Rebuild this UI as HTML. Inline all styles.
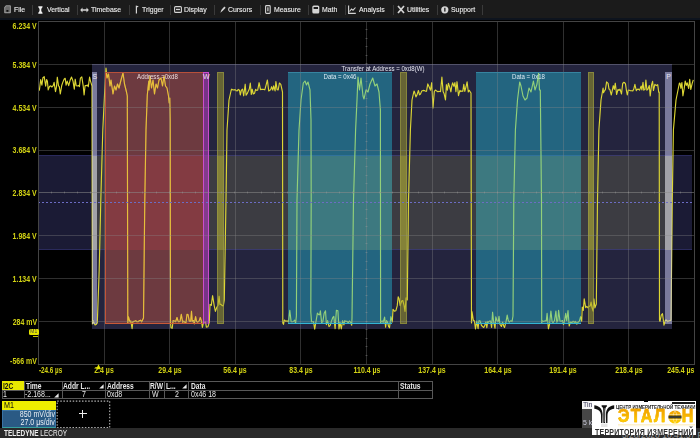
<!DOCTYPE html><html><head><meta charset="utf-8"><style>
html,body{margin:0;padding:0;background:#000;width:700px;height:438px;overflow:hidden;position:relative;font-family:"Liberation Sans",sans-serif;}
div{position:absolute;box-sizing:border-box;}
.tb{font-size:7.5px;color:#f0f0f0;-webkit-text-stroke:0.1px #f0f0f0;top:3.6px;line-height:11px;white-space:nowrap;transform:scaleX(0.92);transform-origin:0 0;}
.sep{top:4.5px;width:1px;height:10px;background:#3a3a3a;}
.yl{font-size:8.3px;font-weight:bold;color:#d2d214;white-space:nowrap;line-height:9px;transform:scaleX(0.84);}
.tc{font-size:8px;color:#e8e8e8;white-space:nowrap;line-height:9px;transform:scaleX(0.86);transform-origin:0 0;}
.ol{font-size:7px;white-space:nowrap;line-height:9px;transform:scaleX(0.87);transform-origin:50% 0;text-align:center}
</style></head><body>
<div style="left:0;top:0;width:700px;height:18px;background:#1b1b1b"></div>
<div style="left:0;top:18px;width:700px;height:1.5px;background:#0e141e"></div>
<div class="tb" style="left:14.0px">File</div>
<div class="tb" style="left:47.0px">Vertical</div>
<div class="tb" style="left:91.0px">Timebase</div>
<div class="tb" style="left:142.0px">Trigger</div>
<div class="tb" style="left:184.0px">Display</div>
<div class="tb" style="left:228.4px">Cursors</div>
<div class="tb" style="left:273.6px">Measure</div>
<div class="tb" style="left:322.0px">Math</div>
<div class="tb" style="left:359.0px">Analysis</div>
<div class="tb" style="left:407.0px">Utilities</div>
<div class="tb" style="left:451.0px">Support</div>
<div class="sep" style="left:32.2px"></div>
<div class="sep" style="left:77.4px"></div>
<div class="sep" style="left:128.8px"></div>
<div class="sep" style="left:170.2px"></div>
<div class="sep" style="left:214.2px"></div>
<div class="sep" style="left:260.2px"></div>
<div class="sep" style="left:307.8px"></div>
<div class="sep" style="left:344.8px"></div>
<div class="sep" style="left:392.8px"></div>
<div class="sep" style="left:436.8px"></div>
<div class="sep" style="left:482.2px"></div>
<svg style="position:absolute;left:3.8px;top:4.8px" width="8" height="9" viewBox="0 0 8 9"><path d="M2 0.3 L6 0.3 Q6.9 0.3 6.9 1.2 L6.9 7.6 Q6.9 8.3 6.1 8.3 L0.9 8.3 Q0.2 8.3 0.2 7.6 L0.2 2.2 Z" fill="#9c9c9c"/><path d="M2.2 1.3 L5.9 1.3 L5.9 7.3 L1.2 7.3 L1.2 2.4 Z" fill="#6a6a6a"/><rect x="2.4" y="5" width="2" height="1.8" fill="#111"/></svg>
<svg style="position:absolute;left:37.5px;top:5.5px" width="5" height="8" viewBox="0 0 5 8"><path d="M0.3 0.3 L4.5 0.3 L4.5 1.3 Q3.2 2.2 3.2 4 Q3.2 5.8 4.5 6.7 L4.5 7.7 L0.3 7.7 L0.3 6.7 Q1.6 5.8 1.6 4 Q1.6 2.2 0.3 1.3 Z" fill="#f0f0f0"/></svg>
<svg style="position:absolute;left:80px;top:6.5px" width="9" height="6" viewBox="0 0 9 6"><path d="M0.2 3 L2.5 0.6 L2.5 2.2 L6.5 2.2 L6.5 0.6 L8.8 3 L6.5 5.4 L6.5 3.8 L2.5 3.8 L2.5 5.4 Z" fill="#d4d4d4"/></svg>
<svg style="position:absolute;left:134.5px;top:5px" width="5" height="9" viewBox="0 0 5 9"><path d="M0.8 0.5 L3.8 1.2 L2 2.6 L2 8.5 L0.8 8.5 Z" fill="#d4d4d4"/></svg>
<svg style="position:absolute;left:174px;top:5.5px" width="8" height="7" viewBox="0 0 8 7"><rect x="0.6" y="0.6" width="6.8" height="5.8" rx="1" fill="none" stroke="#d4d4d4" stroke-width="1.1"/><rect x="2" y="2.8" width="4" height="1.3" fill="#d4d4d4"/></svg>
<svg style="position:absolute;left:219.5px;top:6px" width="6" height="7" viewBox="0 0 6 7"><path d="M0.3 6.7 L1.5 3.8 L4.3 0.5 L5.7 1.7 L2.8 4.8 Z" fill="#d4d4d4"/></svg>
<svg style="position:absolute;left:265px;top:5px" width="6" height="9" viewBox="0 0 6 9"><rect x="0.6" y="0.6" width="4.6" height="7.8" rx="0.8" fill="none" stroke="#d4d4d4" stroke-width="1.1"/><rect x="2.3" y="2.3" width="1.2" height="4" fill="#d4d4d4"/></svg>
<svg style="position:absolute;left:312px;top:5px" width="8" height="9" viewBox="0 0 8 9"><rect x="0.3" y="0.5" width="7" height="8" rx="1.5" fill="#d4d4d4"/><rect x="1.6" y="2" width="4.4" height="2" fill="#1b1b1b"/></svg>
<svg style="position:absolute;left:348px;top:5px" width="8" height="9" viewBox="0 0 8 9"><path d="M0.6 0.5 L0.6 8.4 L7.8 8.4" stroke="#d4d4d4" stroke-width="1.1" fill="none"/><path d="M1.5 6.5 L3.5 4 L5 5.2 L7.5 2.5" stroke="#d4d4d4" stroke-width="1.1" fill="none"/></svg>
<svg style="position:absolute;left:397px;top:5px" width="8" height="9" viewBox="0 0 8 9"><path d="M1 1 L7 8 M7 1 L1 8" stroke="#d4d4d4" stroke-width="1.7" fill="none"/></svg>
<svg style="position:absolute;left:441px;top:5.5px" width="8" height="8" viewBox="0 0 8 8"><circle cx="3.8" cy="3.8" r="3.6" fill="#d4d4d4"/><rect x="3.2" y="1.8" width="1.3" height="3.8" fill="#1b1b1b"/></svg>
<div style="left:92px;top:64px;width:580px;height:264.5px;background:#24243e;border-top:1px solid #36365a"></div><div style="left:38px;top:155px;width:654px;height:95px;background:#1b1b35;border-top:1px solid #2a2a5c;border-bottom:1px solid #2a2a5c"></div><div style="left:92px;top:155px;width:580px;height:95px;background:#3c3c42;border-top:1px solid #3a3a6c;border-bottom:1px solid #3a3a6c"></div><div style="left:92.0px;top:156px;width:5.4px;height:94px;background:#747456"></div><div style="left:665.4px;top:156px;width:6.4px;height:94px;background:#747456"></div><div style="left:105.0px;top:156px;width:98.4px;height:94px;background:#462641"></div><div style="left:203.4px;top:156px;width:5.8px;height:94px;background:#423848"></div><div style="left:217.2px;top:156px;width:6.9px;height:94px;background:#606046"></div><div style="left:400.1px;top:156px;width:6.7px;height:94px;background:#606046"></div><div style="left:588.0px;top:156px;width:6.2px;height:94px;background:#606046"></div><div style="left:288.0px;top:156px;width:104.4px;height:94px;background:#4f453e"></div><div style="left:476.3px;top:156px;width:104.7px;height:94px;background:#4f453e"></div>
<svg style="position:absolute;left:0;top:0" width="700" height="438"><path d="M38.0 90.4 L39.4 90.2 L40.7 79.6 L41.9 85.2 L42.9 77.8 L44.2 76.7 L45.7 86.2 L46.6 79.5 L47.4 81.2 L48.2 89.9 L49.6 86.3 L50.8 85.9 L51.8 87.0 L53.2 85.6 L54.1 82.3 L55.5 91.7 L56.5 86.7 L57.3 77.2 L58.5 85.8 L59.3 86.6 L60.3 94.0 L61.8 85.2 L62.8 82.4 L64.1 79.3 L65.2 78.3 L66.1 85.2 L67.2 81.1 L68.7 85.6 L70.1 80.3 L71.5 77.0 L73.0 81.1 L74.3 89.2 L75.2 79.2 L76.2 85.7 L77.3 86.0 L78.5 85.4 L79.4 86.6 L80.4 78.2 L81.8 76.9 L83.2 85.8 L84.1 95.0 L85.1 85.5 L86.5 85.6 L87.4 85.1 L88.3 86.7 L89.6 77.1 L90.5 81.1 L92.0 86.0 L92.4 324.0 L93.0 320.5 L94.1 323.3 L95.1 325.0 L96.4 324.2 L97.3 323.0 L99.2 270.0 L100.8 200.0 L102.8 130.0 L104.5 95.0 L106.0 68.0 L107.0 78.0 L108.5 74.0 L110.0 86.0 L111.0 80.0 L113.0 94.0 L114.5 86.0 L116.0 90.0 L117.5 84.0 L119.0 88.0 L121.0 80.0 L123.0 73.0 L124.5 84.0 L126.5 92.0 L127.3 96.0 L127.8 323.0 L128.5 316.9 L129.9 321.9 L130.8 321.0 L132.1 328.6 L132.9 321.5 L134.3 321.4 L135.7 320.7 L137.0 321.7 L138.1 321.7 L139.3 320.8 L140.5 320.2 L141.7 321.8 L143.5 318.0 L144.8 200.0 L146.0 130.0 L147.3 95.0 L148.0 88.0 L148.8 81.0 L149.0 90.0 L150.0 76.0 L151.5 88.0 L153.0 80.0 L154.5 94.0 L156.0 84.0 L157.5 88.0 L159.0 80.0 L161.0 78.0 L162.5 86.0 L164.0 76.0 L165.5 86.0 L167.0 88.0 L168.5 96.0 L169.2 103.0 L169.8 98.0 L170.2 120.0 L170.5 323.0 L171.0 327.7 L172.2 328.3 L173.1 320.6 L174.3 321.0 L175.6 321.7 L177.0 317.5 L178.0 320.9 L178.9 321.8 L180.1 321.2 L181.3 314.4 L182.7 322.3 L183.8 321.1 L184.7 322.2 L186.0 322.4 L187.0 314.3 L188.0 314.5 L189.3 321.1 L190.7 321.4 L191.5 311.2 L192.3 321.6 L193.4 320.5 L194.3 323.9 L195.6 316.5 L196.5 321.4 L197.7 322.1 L199.2 320.9 L200.3 317.5 L201.4 320.9 L202.4 327.5 L203.6 322.0 L204.7 322.3 L205.5 321.9 L206.4 327.1 L207.9 326.8 L209.3 322.4 L210.0 304.4 L211.3 305.3 L212.6 295.7 L214.1 305.1 L215.4 311.4 L216.8 307.4 L218.0 305.5 L219.1 296.2 L219.9 304.3 L221.0 304.3 L221.9 305.4 L223.3 305.9 L224.3 300.0 L226.0 200.0 L227.0 130.0 L229.0 100.0 L231.0 91.0 L231.5 89.2 L232.5 89.6 L233.8 90.0 L235.2 89.6 L236.2 90.8 L237.2 90.9 L238.3 89.4 L239.5 90.2 L240.3 95.0 L241.4 90.1 L242.6 89.1 L243.7 95.8 L245.2 84.2 L246.1 95.2 L247.5 93.1 L248.4 90.9 L249.3 89.0 L250.3 83.0 L251.3 94.4 L252.2 89.2 L253.3 94.0 L254.5 93.3 L255.6 89.3 L256.5 90.3 L257.7 90.2 L259.1 82.7 L260.5 89.6 L261.5 89.4 L263.0 89.3 L263.9 89.5 L264.8 89.8 L266.2 84.6 L267.4 80.0 L268.7 90.9 L269.6 90.5 L270.8 89.4 L271.6 86.7 L272.8 90.1 L273.7 85.8 L275.1 90.9 L275.9 81.5 L277.1 89.7 L278.2 89.9 L279.4 83.0 L280.8 84.4 L282.5 92.0 L282.8 323.0 L283.5 324.3 L284.4 320.0 L285.8 321.4 L287.2 320.8 L288.5 322.0 L289.8 310.4 L291.1 321.6 L292.2 321.8 L293.5 321.5 L294.6 320.1 L295.6 323.4 L296.4 316.0 L297.0 200.0 L299.0 130.0 L301.0 100.0 L303.3 83.0 L305.0 81.0 L306.5 85.0 L308.0 82.0 L310.0 90.0 L311.0 120.0 L311.2 200.0 L310.8 312.0 L311.5 321.7 L312.5 321.8 L313.5 321.6 L314.7 329.1 L315.9 322.0 L317.4 313.1 L318.7 314.6 L319.6 314.8 L320.4 310.9 L321.6 322.4 L322.8 321.8 L324.2 313.2 L325.5 310.8 L326.4 324.7 L327.6 320.6 L329.0 326.6 L330.2 325.3 L331.5 321.1 L332.8 317.5 L333.8 316.4 L335.1 328.6 L336.4 310.3 L337.9 310.9 L339.0 329.0 L340.0 322.4 L341.3 329.0 L342.6 320.7 L343.9 324.9 L344.7 320.7 L345.8 321.4 L346.8 321.3 L348.2 322.5 L349.6 321.0 L350.5 322.1 L351.7 325.2 L352.0 318.0 L353.5 200.0 L355.6 130.0 L357.0 100.0 L358.0 77.0 L359.5 90.0 L361.0 78.0 L363.0 96.0 L364.0 99.0 L366.0 90.0 L368.0 92.0 L370.0 84.0 L372.7 78.0 L375.0 86.0 L377.0 84.0 L379.0 92.0 L380.4 110.0 L380.6 323.0 L381.0 321.7 L382.2 320.9 L383.2 322.3 L384.6 317.1 L385.6 327.1 L386.5 320.6 L387.4 321.6 L388.6 326.4 L389.5 327.8 L390.9 316.7 L392.3 322.0 L393.0 309.3 L394.4 311.2 L395.9 310.7 L397.2 305.9 L398.2 296.8 L399.1 298.8 L400.2 305.6 L401.6 301.1 L402.8 300.5 L404.1 305.6 L405.0 311.5 L406.1 297.9 L407.3 300.0 L408.5 200.0 L410.4 130.0 L412.0 100.0 L414.0 91.0 L414.5 91.9 L415.9 96.9 L417.0 94.9 L418.4 90.5 L419.5 94.8 L420.5 94.0 L421.7 91.1 L423.1 90.4 L424.4 90.6 L425.3 91.1 L426.5 91.3 L427.8 83.9 L429.2 87.0 L430.5 90.2 L431.7 82.7 L433.0 108.0 L434.3 91.5 L435.4 90.0 L436.7 91.1 L438.0 91.8 L439.1 91.3 L440.5 91.7 L441.9 77.0 L443.1 91.6 L444.1 93.7 L445.5 100.0 L446.4 84.7 L447.4 90.1 L448.4 83.3 L449.7 87.1 L450.9 91.8 L451.7 86.3 L452.6 82.8 L453.9 86.3 L454.9 82.6 L455.9 91.6 L457.0 81.7 L458.5 95.6 L459.9 90.4 L460.8 91.6 L461.8 91.0 L462.8 91.3 L463.8 84.4 L464.8 91.4 L466.1 86.5 L467.1 81.8 L468.3 92.0 L469.2 90.3 L471.0 93.0 L471.5 323.0 L472.0 311.6 L473.4 320.7 L474.4 320.7 L475.5 328.9 L476.7 321.1 L478.1 328.7 L478.9 320.9 L480.1 320.8 L481.5 325.5 L482.4 326.3 L483.7 327.5 L484.5 326.3 L486.0 321.8 L486.8 327.6 L487.8 321.4 L488.6 322.1 L489.5 321.1 L490.6 321.1 L491.6 327.4 L492.6 312.2 L493.6 321.6 L495.0 328.2 L495.8 316.9 L497.1 320.9 L498.2 321.7 L499.0 316.4 L499.9 324.2 L501.4 326.5 L502.6 322.1 L503.7 326.0 L504.5 327.5 L506.0 321.8 L507.2 315.1 L508.3 320.7 L509.3 322.1 L510.7 320.8 L512.0 321.6 L513.0 316.0 L513.8 200.0 L515.4 130.0 L517.5 100.0 L519.7 82.0 L521.0 86.0 L523.0 96.0 L525.0 100.0 L527.0 98.0 L529.0 88.0 L531.0 92.0 L533.4 81.0 L535.0 90.0 L537.0 84.0 L538.6 73.0 L539.5 90.0 L540.3 90.0 L541.5 200.0 L541.7 323.0 L542.2 320.8 L543.5 321.5 L544.8 320.9 L546.3 320.9 L547.1 313.3 L548.4 328.8 L549.5 324.5 L550.9 311.0 L552.1 321.6 L553.1 322.5 L554.5 320.7 L555.9 311.0 L556.8 322.2 L557.8 320.7 L558.6 310.3 L560.0 321.1 L561.3 321.3 L562.5 320.5 L563.5 324.6 L564.5 320.8 L565.7 313.4 L566.7 320.6 L568.0 310.5 L569.2 326.0 L570.5 322.0 L571.8 322.5 L573.2 321.3 L574.3 322.3 L575.4 321.4 L576.9 324.1 L578.2 322.0 L579.4 321.1 L580.6 316.7 L581.7 321.3 L582.3 307.1 L583.3 310.4 L584.2 298.8 L585.7 307.7 L586.8 306.4 L588.1 307.8 L589.0 306.2 L590.2 306.0 L591.1 302.1 L592.0 307.6 L593.1 311.2 L593.9 298.8 L594.9 307.9 L596.3 304.0 L597.5 200.0 L598.9 130.0 L601.0 100.0 L603.1 88.0 L603.5 92.6 L604.5 90.8 L605.4 89.7 L606.6 81.9 L608.1 83.3 L609.0 89.1 L609.9 89.6 L611.3 95.0 L612.2 90.9 L613.3 85.7 L614.3 89.4 L615.3 83.2 L616.6 94.5 L618.0 89.5 L619.0 90.3 L620.0 89.2 L621.5 94.0 L622.7 83.5 L623.7 82.4 L624.6 82.6 L625.5 83.8 L626.5 91.0 L627.3 94.9 L628.3 90.0 L629.3 90.3 L630.3 90.6 L631.5 90.7 L632.8 90.9 L633.7 89.3 L634.9 84.4 L636.3 90.6 L637.2 89.4 L638.4 89.1 L639.6 90.1 L641.1 86.1 L641.9 89.9 L643.0 82.4 L643.8 90.1 L645.0 89.5 L645.9 80.0 L646.9 90.1 L647.9 89.2 L649.3 85.5 L650.2 96.0 L651.6 84.6 L652.6 81.4 L653.4 90.5 L654.9 84.3 L656.3 85.6 L657.7 84.7 L658.7 92.1 L659.2 92.0 L659.5 320.0 L660.0 321.5 L661.3 315.2 L662.5 313.7 L664.0 325.1 L665.4 320.1 L666.5 320.1 L667.6 321.7 L668.8 320.9 L669.9 320.8 L671.0 320.0 L672.3 200.0 L673.4 130.0 L676.0 100.0 L679.4 83.0 L680.0 83.2 L680.9 88.3 L681.9 82.5 L682.9 95.8 L684.2 88.4 L685.2 81.0 L686.3 85.4 L687.2 82.9 L688.7 88.5 L689.7 79.4 L690.8 89.4 L692.2 83.4 L693.3 79.8" fill="none" stroke="#dcd634" stroke-width="1.15" stroke-linejoin="round"/></svg>
<div style="left:92.0px;top:72px;width:5.4px;height:252px;background:#d0d0fa;opacity:0.50"></div><div style="left:665.4px;top:72px;width:6.4px;height:252px;background:#d0d0fa;opacity:0.50"></div><div style="left:105.0px;top:72px;width:98.4px;height:252px;background:#f76344;opacity:0.35"></div><div style="left:203.4px;top:72px;width:5.8px;height:252px;background:#ad3fb9;opacity:0.60"></div><div style="left:217.2px;top:72px;width:6.9px;height:252px;background:#a8a42a;opacity:0.50"></div><div style="left:400.1px;top:72px;width:6.7px;height:252px;background:#a8a42a;opacity:0.50"></div><div style="left:588.0px;top:72px;width:6.2px;height:252px;background:#a8a42a;opacity:0.50"></div><div style="left:288.0px;top:72px;width:104.4px;height:252px;background:#24c9e3;opacity:0.40"></div><div style="left:476.3px;top:72px;width:104.7px;height:252px;background:#24c9e3;opacity:0.40"></div>
<svg style="position:absolute;left:0;top:0" width="700" height="438"><defs><clipPath id="cr"><rect x="105" y="72" width="98.4" height="252"/></clipPath></defs><path d="M38.0 90.4 L39.4 90.2 L40.7 79.6 L41.9 85.2 L42.9 77.8 L44.2 76.7 L45.7 86.2 L46.6 79.5 L47.4 81.2 L48.2 89.9 L49.6 86.3 L50.8 85.9 L51.8 87.0 L53.2 85.6 L54.1 82.3 L55.5 91.7 L56.5 86.7 L57.3 77.2 L58.5 85.8 L59.3 86.6 L60.3 94.0 L61.8 85.2 L62.8 82.4 L64.1 79.3 L65.2 78.3 L66.1 85.2 L67.2 81.1 L68.7 85.6 L70.1 80.3 L71.5 77.0 L73.0 81.1 L74.3 89.2 L75.2 79.2 L76.2 85.7 L77.3 86.0 L78.5 85.4 L79.4 86.6 L80.4 78.2 L81.8 76.9 L83.2 85.8 L84.1 95.0 L85.1 85.5 L86.5 85.6 L87.4 85.1 L88.3 86.7 L89.6 77.1 L90.5 81.1 L92.0 86.0 L92.4 324.0 L93.0 320.5 L94.1 323.3 L95.1 325.0 L96.4 324.2 L97.3 323.0 L99.2 270.0 L100.8 200.0 L102.8 130.0 L104.5 95.0 L106.0 68.0 L107.0 78.0 L108.5 74.0 L110.0 86.0 L111.0 80.0 L113.0 94.0 L114.5 86.0 L116.0 90.0 L117.5 84.0 L119.0 88.0 L121.0 80.0 L123.0 73.0 L124.5 84.0 L126.5 92.0 L127.3 96.0 L127.8 323.0 L128.5 316.9 L129.9 321.9 L130.8 321.0 L132.1 328.6 L132.9 321.5 L134.3 321.4 L135.7 320.7 L137.0 321.7 L138.1 321.7 L139.3 320.8 L140.5 320.2 L141.7 321.8 L143.5 318.0 L144.8 200.0 L146.0 130.0 L147.3 95.0 L148.0 88.0 L148.8 81.0 L149.0 90.0 L150.0 76.0 L151.5 88.0 L153.0 80.0 L154.5 94.0 L156.0 84.0 L157.5 88.0 L159.0 80.0 L161.0 78.0 L162.5 86.0 L164.0 76.0 L165.5 86.0 L167.0 88.0 L168.5 96.0 L169.2 103.0 L169.8 98.0 L170.2 120.0 L170.5 323.0 L171.0 327.7 L172.2 328.3 L173.1 320.6 L174.3 321.0 L175.6 321.7 L177.0 317.5 L178.0 320.9 L178.9 321.8 L180.1 321.2 L181.3 314.4 L182.7 322.3 L183.8 321.1 L184.7 322.2 L186.0 322.4 L187.0 314.3 L188.0 314.5 L189.3 321.1 L190.7 321.4 L191.5 311.2 L192.3 321.6 L193.4 320.5 L194.3 323.9 L195.6 316.5 L196.5 321.4 L197.7 322.1 L199.2 320.9 L200.3 317.5 L201.4 320.9 L202.4 327.5 L203.6 322.0 L204.7 322.3 L205.5 321.9 L206.4 327.1 L207.9 326.8 L209.3 322.4 L210.0 304.4 L211.3 305.3 L212.6 295.7 L214.1 305.1 L215.4 311.4 L216.8 307.4 L218.0 305.5 L219.1 296.2 L219.9 304.3 L221.0 304.3 L221.9 305.4 L223.3 305.9 L224.3 300.0 L226.0 200.0 L227.0 130.0 L229.0 100.0 L231.0 91.0 L231.5 89.2 L232.5 89.6 L233.8 90.0 L235.2 89.6 L236.2 90.8 L237.2 90.9 L238.3 89.4 L239.5 90.2 L240.3 95.0 L241.4 90.1 L242.6 89.1 L243.7 95.8 L245.2 84.2 L246.1 95.2 L247.5 93.1 L248.4 90.9 L249.3 89.0 L250.3 83.0 L251.3 94.4 L252.2 89.2 L253.3 94.0 L254.5 93.3 L255.6 89.3 L256.5 90.3 L257.7 90.2 L259.1 82.7 L260.5 89.6 L261.5 89.4 L263.0 89.3 L263.9 89.5 L264.8 89.8 L266.2 84.6 L267.4 80.0 L268.7 90.9 L269.6 90.5 L270.8 89.4 L271.6 86.7 L272.8 90.1 L273.7 85.8 L275.1 90.9 L275.9 81.5 L277.1 89.7 L278.2 89.9 L279.4 83.0 L280.8 84.4 L282.5 92.0 L282.8 323.0 L283.5 324.3 L284.4 320.0 L285.8 321.4 L287.2 320.8 L288.5 322.0 L289.8 310.4 L291.1 321.6 L292.2 321.8 L293.5 321.5 L294.6 320.1 L295.6 323.4 L296.4 316.0 L297.0 200.0 L299.0 130.0 L301.0 100.0 L303.3 83.0 L305.0 81.0 L306.5 85.0 L308.0 82.0 L310.0 90.0 L311.0 120.0 L311.2 200.0 L310.8 312.0 L311.5 321.7 L312.5 321.8 L313.5 321.6 L314.7 329.1 L315.9 322.0 L317.4 313.1 L318.7 314.6 L319.6 314.8 L320.4 310.9 L321.6 322.4 L322.8 321.8 L324.2 313.2 L325.5 310.8 L326.4 324.7 L327.6 320.6 L329.0 326.6 L330.2 325.3 L331.5 321.1 L332.8 317.5 L333.8 316.4 L335.1 328.6 L336.4 310.3 L337.9 310.9 L339.0 329.0 L340.0 322.4 L341.3 329.0 L342.6 320.7 L343.9 324.9 L344.7 320.7 L345.8 321.4 L346.8 321.3 L348.2 322.5 L349.6 321.0 L350.5 322.1 L351.7 325.2 L352.0 318.0 L353.5 200.0 L355.6 130.0 L357.0 100.0 L358.0 77.0 L359.5 90.0 L361.0 78.0 L363.0 96.0 L364.0 99.0 L366.0 90.0 L368.0 92.0 L370.0 84.0 L372.7 78.0 L375.0 86.0 L377.0 84.0 L379.0 92.0 L380.4 110.0 L380.6 323.0 L381.0 321.7 L382.2 320.9 L383.2 322.3 L384.6 317.1 L385.6 327.1 L386.5 320.6 L387.4 321.6 L388.6 326.4 L389.5 327.8 L390.9 316.7 L392.3 322.0 L393.0 309.3 L394.4 311.2 L395.9 310.7 L397.2 305.9 L398.2 296.8 L399.1 298.8 L400.2 305.6 L401.6 301.1 L402.8 300.5 L404.1 305.6 L405.0 311.5 L406.1 297.9 L407.3 300.0 L408.5 200.0 L410.4 130.0 L412.0 100.0 L414.0 91.0 L414.5 91.9 L415.9 96.9 L417.0 94.9 L418.4 90.5 L419.5 94.8 L420.5 94.0 L421.7 91.1 L423.1 90.4 L424.4 90.6 L425.3 91.1 L426.5 91.3 L427.8 83.9 L429.2 87.0 L430.5 90.2 L431.7 82.7 L433.0 108.0 L434.3 91.5 L435.4 90.0 L436.7 91.1 L438.0 91.8 L439.1 91.3 L440.5 91.7 L441.9 77.0 L443.1 91.6 L444.1 93.7 L445.5 100.0 L446.4 84.7 L447.4 90.1 L448.4 83.3 L449.7 87.1 L450.9 91.8 L451.7 86.3 L452.6 82.8 L453.9 86.3 L454.9 82.6 L455.9 91.6 L457.0 81.7 L458.5 95.6 L459.9 90.4 L460.8 91.6 L461.8 91.0 L462.8 91.3 L463.8 84.4 L464.8 91.4 L466.1 86.5 L467.1 81.8 L468.3 92.0 L469.2 90.3 L471.0 93.0 L471.5 323.0 L472.0 311.6 L473.4 320.7 L474.4 320.7 L475.5 328.9 L476.7 321.1 L478.1 328.7 L478.9 320.9 L480.1 320.8 L481.5 325.5 L482.4 326.3 L483.7 327.5 L484.5 326.3 L486.0 321.8 L486.8 327.6 L487.8 321.4 L488.6 322.1 L489.5 321.1 L490.6 321.1 L491.6 327.4 L492.6 312.2 L493.6 321.6 L495.0 328.2 L495.8 316.9 L497.1 320.9 L498.2 321.7 L499.0 316.4 L499.9 324.2 L501.4 326.5 L502.6 322.1 L503.7 326.0 L504.5 327.5 L506.0 321.8 L507.2 315.1 L508.3 320.7 L509.3 322.1 L510.7 320.8 L512.0 321.6 L513.0 316.0 L513.8 200.0 L515.4 130.0 L517.5 100.0 L519.7 82.0 L521.0 86.0 L523.0 96.0 L525.0 100.0 L527.0 98.0 L529.0 88.0 L531.0 92.0 L533.4 81.0 L535.0 90.0 L537.0 84.0 L538.6 73.0 L539.5 90.0 L540.3 90.0 L541.5 200.0 L541.7 323.0 L542.2 320.8 L543.5 321.5 L544.8 320.9 L546.3 320.9 L547.1 313.3 L548.4 328.8 L549.5 324.5 L550.9 311.0 L552.1 321.6 L553.1 322.5 L554.5 320.7 L555.9 311.0 L556.8 322.2 L557.8 320.7 L558.6 310.3 L560.0 321.1 L561.3 321.3 L562.5 320.5 L563.5 324.6 L564.5 320.8 L565.7 313.4 L566.7 320.6 L568.0 310.5 L569.2 326.0 L570.5 322.0 L571.8 322.5 L573.2 321.3 L574.3 322.3 L575.4 321.4 L576.9 324.1 L578.2 322.0 L579.4 321.1 L580.6 316.7 L581.7 321.3 L582.3 307.1 L583.3 310.4 L584.2 298.8 L585.7 307.7 L586.8 306.4 L588.1 307.8 L589.0 306.2 L590.2 306.0 L591.1 302.1 L592.0 307.6 L593.1 311.2 L593.9 298.8 L594.9 307.9 L596.3 304.0 L597.5 200.0 L598.9 130.0 L601.0 100.0 L603.1 88.0 L603.5 92.6 L604.5 90.8 L605.4 89.7 L606.6 81.9 L608.1 83.3 L609.0 89.1 L609.9 89.6 L611.3 95.0 L612.2 90.9 L613.3 85.7 L614.3 89.4 L615.3 83.2 L616.6 94.5 L618.0 89.5 L619.0 90.3 L620.0 89.2 L621.5 94.0 L622.7 83.5 L623.7 82.4 L624.6 82.6 L625.5 83.8 L626.5 91.0 L627.3 94.9 L628.3 90.0 L629.3 90.3 L630.3 90.6 L631.5 90.7 L632.8 90.9 L633.7 89.3 L634.9 84.4 L636.3 90.6 L637.2 89.4 L638.4 89.1 L639.6 90.1 L641.1 86.1 L641.9 89.9 L643.0 82.4 L643.8 90.1 L645.0 89.5 L645.9 80.0 L646.9 90.1 L647.9 89.2 L649.3 85.5 L650.2 96.0 L651.6 84.6 L652.6 81.4 L653.4 90.5 L654.9 84.3 L656.3 85.6 L657.7 84.7 L658.7 92.1 L659.2 92.0 L659.5 320.0 L660.0 321.5 L661.3 315.2 L662.5 313.7 L664.0 325.1 L665.4 320.1 L666.5 320.1 L667.6 321.7 L668.8 320.9 L669.9 320.8 L671.0 320.0 L672.3 200.0 L673.4 130.0 L676.0 100.0 L679.4 83.0 L680.0 83.2 L680.9 88.3 L681.9 82.5 L682.9 95.8 L684.2 88.4 L685.2 81.0 L686.3 85.4 L687.2 82.9 L688.7 88.5 L689.7 79.4 L690.8 89.4 L692.2 83.4 L693.3 79.8" clip-path="url(#cr)" fill="none" stroke="#e8e040" stroke-opacity="0.35" stroke-width="1.1" stroke-linejoin="round"/></svg>
<svg style="position:absolute;left:0;top:0" width="700" height="438"><line x1="104.5" y1="21" x2="104.5" y2="364" stroke="#8a8a8a" stroke-opacity="0.34" stroke-width="1"/><line x1="169.5" y1="21" x2="169.5" y2="364" stroke="#8a8a8a" stroke-opacity="0.34" stroke-width="1"/><line x1="235.5" y1="21" x2="235.5" y2="364" stroke="#8a8a8a" stroke-opacity="0.34" stroke-width="1"/><line x1="300.5" y1="21" x2="300.5" y2="364" stroke="#8a8a8a" stroke-opacity="0.34" stroke-width="1"/><line x1="366.5" y1="21" x2="366.5" y2="364" stroke="#8a8a8a" stroke-opacity="0.34" stroke-width="1"/><line x1="432.5" y1="21" x2="432.5" y2="364" stroke="#8a8a8a" stroke-opacity="0.34" stroke-width="1"/><line x1="497.5" y1="21" x2="497.5" y2="364" stroke="#8a8a8a" stroke-opacity="0.34" stroke-width="1"/><line x1="563.5" y1="21" x2="563.5" y2="364" stroke="#8a8a8a" stroke-opacity="0.34" stroke-width="1"/><line x1="628.5" y1="21" x2="628.5" y2="364" stroke="#8a8a8a" stroke-opacity="0.34" stroke-width="1"/><line x1="38" y1="64.5" x2="694" y2="64.5" stroke="#8a8a8a" stroke-opacity="0.34" stroke-width="1"/><line x1="38" y1="107.5" x2="694" y2="107.5" stroke="#8a8a8a" stroke-opacity="0.34" stroke-width="1"/><line x1="38" y1="150.5" x2="694" y2="150.5" stroke="#8a8a8a" stroke-opacity="0.34" stroke-width="1"/><line x1="38" y1="192.5" x2="694" y2="192.5" stroke="#8a8a8a" stroke-opacity="0.34" stroke-width="1"/><line x1="38" y1="235.5" x2="694" y2="235.5" stroke="#8a8a8a" stroke-opacity="0.34" stroke-width="1"/><line x1="38" y1="278.5" x2="694" y2="278.5" stroke="#8a8a8a" stroke-opacity="0.34" stroke-width="1"/><line x1="38" y1="321.5" x2="694" y2="321.5" stroke="#8a8a8a" stroke-opacity="0.34" stroke-width="1"/><line x1="38" y1="192.5" x2="694" y2="192.5" stroke="#909090" stroke-opacity="0.3" stroke-width="1"/><line x1="38.5" y1="191.5" x2="38.5" y2="193.5" stroke="#a0a0a0" stroke-opacity="0.35" stroke-width="1"/><line x1="51.5" y1="191.5" x2="51.5" y2="193.5" stroke="#a0a0a0" stroke-opacity="0.35" stroke-width="1"/><line x1="64.5" y1="191.5" x2="64.5" y2="193.5" stroke="#a0a0a0" stroke-opacity="0.35" stroke-width="1"/><line x1="77.5" y1="191.5" x2="77.5" y2="193.5" stroke="#a0a0a0" stroke-opacity="0.35" stroke-width="1"/><line x1="90.5" y1="191.5" x2="90.5" y2="193.5" stroke="#a0a0a0" stroke-opacity="0.35" stroke-width="1"/><line x1="103.5" y1="191.5" x2="103.5" y2="193.5" stroke="#a0a0a0" stroke-opacity="0.35" stroke-width="1"/><line x1="116.5" y1="191.5" x2="116.5" y2="193.5" stroke="#a0a0a0" stroke-opacity="0.35" stroke-width="1"/><line x1="129.5" y1="191.5" x2="129.5" y2="193.5" stroke="#a0a0a0" stroke-opacity="0.35" stroke-width="1"/><line x1="142.5" y1="191.5" x2="142.5" y2="193.5" stroke="#a0a0a0" stroke-opacity="0.35" stroke-width="1"/><line x1="156.5" y1="191.5" x2="156.5" y2="193.5" stroke="#a0a0a0" stroke-opacity="0.35" stroke-width="1"/><line x1="169.5" y1="191.5" x2="169.5" y2="193.5" stroke="#a0a0a0" stroke-opacity="0.35" stroke-width="1"/><line x1="182.5" y1="191.5" x2="182.5" y2="193.5" stroke="#a0a0a0" stroke-opacity="0.35" stroke-width="1"/><line x1="195.5" y1="191.5" x2="195.5" y2="193.5" stroke="#a0a0a0" stroke-opacity="0.35" stroke-width="1"/><line x1="208.5" y1="191.5" x2="208.5" y2="193.5" stroke="#a0a0a0" stroke-opacity="0.35" stroke-width="1"/><line x1="221.5" y1="191.5" x2="221.5" y2="193.5" stroke="#a0a0a0" stroke-opacity="0.35" stroke-width="1"/><line x1="234.5" y1="191.5" x2="234.5" y2="193.5" stroke="#a0a0a0" stroke-opacity="0.35" stroke-width="1"/><line x1="247.5" y1="191.5" x2="247.5" y2="193.5" stroke="#a0a0a0" stroke-opacity="0.35" stroke-width="1"/><line x1="261.5" y1="191.5" x2="261.5" y2="193.5" stroke="#a0a0a0" stroke-opacity="0.35" stroke-width="1"/><line x1="274.5" y1="191.5" x2="274.5" y2="193.5" stroke="#a0a0a0" stroke-opacity="0.35" stroke-width="1"/><line x1="287.5" y1="191.5" x2="287.5" y2="193.5" stroke="#a0a0a0" stroke-opacity="0.35" stroke-width="1"/><line x1="300.5" y1="191.5" x2="300.5" y2="193.5" stroke="#a0a0a0" stroke-opacity="0.35" stroke-width="1"/><line x1="313.5" y1="191.5" x2="313.5" y2="193.5" stroke="#a0a0a0" stroke-opacity="0.35" stroke-width="1"/><line x1="326.5" y1="191.5" x2="326.5" y2="193.5" stroke="#a0a0a0" stroke-opacity="0.35" stroke-width="1"/><line x1="339.5" y1="191.5" x2="339.5" y2="193.5" stroke="#a0a0a0" stroke-opacity="0.35" stroke-width="1"/><line x1="352.5" y1="191.5" x2="352.5" y2="193.5" stroke="#a0a0a0" stroke-opacity="0.35" stroke-width="1"/><line x1="366.5" y1="191.5" x2="366.5" y2="193.5" stroke="#a0a0a0" stroke-opacity="0.35" stroke-width="1"/><line x1="379.5" y1="191.5" x2="379.5" y2="193.5" stroke="#a0a0a0" stroke-opacity="0.35" stroke-width="1"/><line x1="392.5" y1="191.5" x2="392.5" y2="193.5" stroke="#a0a0a0" stroke-opacity="0.35" stroke-width="1"/><line x1="405.5" y1="191.5" x2="405.5" y2="193.5" stroke="#a0a0a0" stroke-opacity="0.35" stroke-width="1"/><line x1="418.5" y1="191.5" x2="418.5" y2="193.5" stroke="#a0a0a0" stroke-opacity="0.35" stroke-width="1"/><line x1="431.5" y1="191.5" x2="431.5" y2="193.5" stroke="#a0a0a0" stroke-opacity="0.35" stroke-width="1"/><line x1="444.5" y1="191.5" x2="444.5" y2="193.5" stroke="#a0a0a0" stroke-opacity="0.35" stroke-width="1"/><line x1="457.5" y1="191.5" x2="457.5" y2="193.5" stroke="#a0a0a0" stroke-opacity="0.35" stroke-width="1"/><line x1="470.5" y1="191.5" x2="470.5" y2="193.5" stroke="#a0a0a0" stroke-opacity="0.35" stroke-width="1"/><line x1="484.5" y1="191.5" x2="484.5" y2="193.5" stroke="#a0a0a0" stroke-opacity="0.35" stroke-width="1"/><line x1="497.5" y1="191.5" x2="497.5" y2="193.5" stroke="#a0a0a0" stroke-opacity="0.35" stroke-width="1"/><line x1="510.5" y1="191.5" x2="510.5" y2="193.5" stroke="#a0a0a0" stroke-opacity="0.35" stroke-width="1"/><line x1="523.5" y1="191.5" x2="523.5" y2="193.5" stroke="#a0a0a0" stroke-opacity="0.35" stroke-width="1"/><line x1="536.5" y1="191.5" x2="536.5" y2="193.5" stroke="#a0a0a0" stroke-opacity="0.35" stroke-width="1"/><line x1="549.5" y1="191.5" x2="549.5" y2="193.5" stroke="#a0a0a0" stroke-opacity="0.35" stroke-width="1"/><line x1="562.5" y1="191.5" x2="562.5" y2="193.5" stroke="#a0a0a0" stroke-opacity="0.35" stroke-width="1"/><line x1="575.5" y1="191.5" x2="575.5" y2="193.5" stroke="#a0a0a0" stroke-opacity="0.35" stroke-width="1"/><line x1="589.5" y1="191.5" x2="589.5" y2="193.5" stroke="#a0a0a0" stroke-opacity="0.35" stroke-width="1"/><line x1="602.5" y1="191.5" x2="602.5" y2="193.5" stroke="#a0a0a0" stroke-opacity="0.35" stroke-width="1"/><line x1="615.5" y1="191.5" x2="615.5" y2="193.5" stroke="#a0a0a0" stroke-opacity="0.35" stroke-width="1"/><line x1="628.5" y1="191.5" x2="628.5" y2="193.5" stroke="#a0a0a0" stroke-opacity="0.35" stroke-width="1"/><line x1="641.5" y1="191.5" x2="641.5" y2="193.5" stroke="#a0a0a0" stroke-opacity="0.35" stroke-width="1"/><line x1="654.5" y1="191.5" x2="654.5" y2="193.5" stroke="#a0a0a0" stroke-opacity="0.35" stroke-width="1"/><line x1="667.5" y1="191.5" x2="667.5" y2="193.5" stroke="#a0a0a0" stroke-opacity="0.35" stroke-width="1"/><line x1="680.5" y1="191.5" x2="680.5" y2="193.5" stroke="#a0a0a0" stroke-opacity="0.35" stroke-width="1"/><line x1="694.5" y1="191.5" x2="694.5" y2="193.5" stroke="#a0a0a0" stroke-opacity="0.35" stroke-width="1"/><line x1="365.5" y1="21.5" x2="367.5" y2="21.5" stroke="#a0a0a0" stroke-opacity="0.35" stroke-width="1"/><line x1="365.5" y1="29.5" x2="367.5" y2="29.5" stroke="#a0a0a0" stroke-opacity="0.35" stroke-width="1"/><line x1="365.5" y1="38.5" x2="367.5" y2="38.5" stroke="#a0a0a0" stroke-opacity="0.35" stroke-width="1"/><line x1="365.5" y1="46.5" x2="367.5" y2="46.5" stroke="#a0a0a0" stroke-opacity="0.35" stroke-width="1"/><line x1="365.5" y1="55.5" x2="367.5" y2="55.5" stroke="#a0a0a0" stroke-opacity="0.35" stroke-width="1"/><line x1="365.5" y1="63.5" x2="367.5" y2="63.5" stroke="#a0a0a0" stroke-opacity="0.35" stroke-width="1"/><line x1="365.5" y1="72.5" x2="367.5" y2="72.5" stroke="#a0a0a0" stroke-opacity="0.35" stroke-width="1"/><line x1="365.5" y1="81.5" x2="367.5" y2="81.5" stroke="#a0a0a0" stroke-opacity="0.35" stroke-width="1"/><line x1="365.5" y1="89.5" x2="367.5" y2="89.5" stroke="#a0a0a0" stroke-opacity="0.35" stroke-width="1"/><line x1="365.5" y1="98.5" x2="367.5" y2="98.5" stroke="#a0a0a0" stroke-opacity="0.35" stroke-width="1"/><line x1="365.5" y1="106.5" x2="367.5" y2="106.5" stroke="#a0a0a0" stroke-opacity="0.35" stroke-width="1"/><line x1="365.5" y1="115.5" x2="367.5" y2="115.5" stroke="#a0a0a0" stroke-opacity="0.35" stroke-width="1"/><line x1="365.5" y1="123.5" x2="367.5" y2="123.5" stroke="#a0a0a0" stroke-opacity="0.35" stroke-width="1"/><line x1="365.5" y1="132.5" x2="367.5" y2="132.5" stroke="#a0a0a0" stroke-opacity="0.35" stroke-width="1"/><line x1="365.5" y1="141.5" x2="367.5" y2="141.5" stroke="#a0a0a0" stroke-opacity="0.35" stroke-width="1"/><line x1="365.5" y1="149.5" x2="367.5" y2="149.5" stroke="#a0a0a0" stroke-opacity="0.35" stroke-width="1"/><line x1="365.5" y1="158.5" x2="367.5" y2="158.5" stroke="#a0a0a0" stroke-opacity="0.35" stroke-width="1"/><line x1="365.5" y1="166.5" x2="367.5" y2="166.5" stroke="#a0a0a0" stroke-opacity="0.35" stroke-width="1"/><line x1="365.5" y1="175.5" x2="367.5" y2="175.5" stroke="#a0a0a0" stroke-opacity="0.35" stroke-width="1"/><line x1="365.5" y1="183.5" x2="367.5" y2="183.5" stroke="#a0a0a0" stroke-opacity="0.35" stroke-width="1"/><line x1="365.5" y1="192.5" x2="367.5" y2="192.5" stroke="#a0a0a0" stroke-opacity="0.35" stroke-width="1"/><line x1="365.5" y1="201.5" x2="367.5" y2="201.5" stroke="#a0a0a0" stroke-opacity="0.35" stroke-width="1"/><line x1="365.5" y1="209.5" x2="367.5" y2="209.5" stroke="#a0a0a0" stroke-opacity="0.35" stroke-width="1"/><line x1="365.5" y1="218.5" x2="367.5" y2="218.5" stroke="#a0a0a0" stroke-opacity="0.35" stroke-width="1"/><line x1="365.5" y1="226.5" x2="367.5" y2="226.5" stroke="#a0a0a0" stroke-opacity="0.35" stroke-width="1"/><line x1="365.5" y1="235.5" x2="367.5" y2="235.5" stroke="#a0a0a0" stroke-opacity="0.35" stroke-width="1"/><line x1="365.5" y1="243.5" x2="367.5" y2="243.5" stroke="#a0a0a0" stroke-opacity="0.35" stroke-width="1"/><line x1="365.5" y1="252.5" x2="367.5" y2="252.5" stroke="#a0a0a0" stroke-opacity="0.35" stroke-width="1"/><line x1="365.5" y1="261.5" x2="367.5" y2="261.5" stroke="#a0a0a0" stroke-opacity="0.35" stroke-width="1"/><line x1="365.5" y1="269.5" x2="367.5" y2="269.5" stroke="#a0a0a0" stroke-opacity="0.35" stroke-width="1"/><line x1="365.5" y1="278.5" x2="367.5" y2="278.5" stroke="#a0a0a0" stroke-opacity="0.35" stroke-width="1"/><line x1="365.5" y1="286.5" x2="367.5" y2="286.5" stroke="#a0a0a0" stroke-opacity="0.35" stroke-width="1"/><line x1="365.5" y1="295.5" x2="367.5" y2="295.5" stroke="#a0a0a0" stroke-opacity="0.35" stroke-width="1"/><line x1="365.5" y1="303.5" x2="367.5" y2="303.5" stroke="#a0a0a0" stroke-opacity="0.35" stroke-width="1"/><line x1="365.5" y1="312.5" x2="367.5" y2="312.5" stroke="#a0a0a0" stroke-opacity="0.35" stroke-width="1"/><line x1="365.5" y1="321.5" x2="367.5" y2="321.5" stroke="#a0a0a0" stroke-opacity="0.35" stroke-width="1"/><line x1="365.5" y1="329.5" x2="367.5" y2="329.5" stroke="#a0a0a0" stroke-opacity="0.35" stroke-width="1"/><line x1="365.5" y1="338.5" x2="367.5" y2="338.5" stroke="#a0a0a0" stroke-opacity="0.35" stroke-width="1"/><line x1="365.5" y1="346.5" x2="367.5" y2="346.5" stroke="#a0a0a0" stroke-opacity="0.35" stroke-width="1"/><line x1="365.5" y1="355.5" x2="367.5" y2="355.5" stroke="#a0a0a0" stroke-opacity="0.35" stroke-width="1"/><line x1="365.5" y1="364.5" x2="367.5" y2="364.5" stroke="#a0a0a0" stroke-opacity="0.35" stroke-width="1"/><line x1="38" y1="202.5" x2="694" y2="202.5" stroke="#6c6cc4" stroke-width="1" stroke-dasharray="2 2"/><rect x="38.5" y="21.5" width="656" height="343" fill="none" stroke="#444444" stroke-width="1"/></svg>
<div style="left:104.6px;top:71.6px;width:1.3px;height:252.8px;background:#c25438"></div>
<div style="left:104.6px;top:71.6px;width:98.8px;height:1.1px;background:#b8503a"></div>
<div style="left:104.6px;top:323.2px;width:98.8px;height:1.3px;background:#c85a38"></div>
<div style="left:203.4px;top:71.6px;width:5.8px;height:252.6px;border:1px solid #cc4ccc;border-bottom:none"></div>
<div style="left:217.2px;top:71.6px;width:6.9px;height:252.6px;border:1px solid rgba(160,160,70,0.55)"></div>
<div style="left:400.1px;top:71.6px;width:6.7px;height:252.6px;border:1px solid rgba(160,160,70,0.55)"></div>
<div style="left:588.0px;top:71.6px;width:6.2px;height:252.6px;border:1px solid rgba(160,160,70,0.55)"></div>
<div style="left:288.0px;top:71.6px;width:104.4px;height:1px;background:#3684a0"></div>
<div style="left:288.0px;top:323px;width:104.4px;height:1.3px;background:#34b4d4"></div>
<div style="left:476.3px;top:71.6px;width:104.7px;height:1px;background:#3684a0"></div>
<div style="left:476.3px;top:323px;width:104.7px;height:1.3px;background:#34b4d4"></div>
<div class="ol" style="left:92px;top:72px;width:5.5px;color:#e4e4f4;transform:none">S</div>
<div class="ol" style="left:665.4px;top:72px;width:6.5px;color:#e4e4f4;transform:none">P</div>
<div class="ol" style="left:202.4px;top:72px;width:8px;color:#f0e0f0;transform:none">W</div>
<div class="ol" style="left:105px;top:72px;width:105px;color:#ecdcdc">Address =0xd8</div>
<div class="ol" style="left:288px;top:72px;width:104px;color:#dceaf2">Data = 0x46</div>
<div class="ol" style="left:476px;top:72px;width:105px;color:#dceaf2">Data = 0x18</div>
<div class="ol" style="left:300px;top:64px;width:166px;color:#e4e4ee">Transfer at Address = 0xd8(W)</div>
<div class="yl" style="right:663.2px;top:22.2px;text-align:right;transform-origin:100% 0">6.234 V</div>
<div class="yl" style="right:663.2px;top:60.6px;text-align:right;transform-origin:100% 0">5.384 V</div>
<div class="yl" style="right:663.2px;top:103.5px;text-align:right;transform-origin:100% 0">4.534 V</div>
<div class="yl" style="right:663.2px;top:146.3px;text-align:right;transform-origin:100% 0">3.684 V</div>
<div class="yl" style="right:663.2px;top:189.2px;text-align:right;transform-origin:100% 0">2.834 V</div>
<div class="yl" style="right:663.2px;top:232.1px;text-align:right;transform-origin:100% 0">1.984 V</div>
<div class="yl" style="right:663.2px;top:274.9px;text-align:right;transform-origin:100% 0">1.134 V</div>
<div class="yl" style="right:663.2px;top:317.8px;text-align:right;transform-origin:100% 0">284 mV</div>
<div class="yl" style="right:663.2px;top:357.4px;text-align:right;transform-origin:100% 0">-566 mV</div>
<div style="left:29px;top:328.8px;width:9.5px;height:6.2px;background:#e4e400;border-radius:1.5px"></div>
<div style="left:29px;top:328.3px;width:9.5px;font-size:5.5px;color:#444;line-height:7px;text-align:center;transform:scaleX(0.9)">M1</div>
<div style="left:32.8px;top:335.8px;width:5.5px;height:1.2px;background:#c8c800"></div>
<div class="yl" style="left:39.2px;top:365.6px;transform-origin:0 0;transform:scaleX(0.76)">-24.6 µs</div>
<div class="yl" style="left:74.1px;top:365.6px;width:60px;text-align:center;transform-origin:50% 0">2.4 µs</div>
<div class="yl" style="left:139.7px;top:365.6px;width:60px;text-align:center;transform-origin:50% 0">29.4 µs</div>
<div class="yl" style="left:205.3px;top:365.6px;width:60px;text-align:center;transform-origin:50% 0">56.4 µs</div>
<div class="yl" style="left:270.9px;top:365.6px;width:60px;text-align:center;transform-origin:50% 0">83.4 µs</div>
<div class="yl" style="left:336.5px;top:365.6px;width:60px;text-align:center;transform-origin:50% 0">110.4 µs</div>
<div class="yl" style="left:402.1px;top:365.6px;width:60px;text-align:center;transform-origin:50% 0">137.4 µs</div>
<div class="yl" style="left:467.7px;top:365.6px;width:60px;text-align:center;transform-origin:50% 0">164.4 µs</div>
<div class="yl" style="left:533.3px;top:365.6px;width:60px;text-align:center;transform-origin:50% 0">191.4 µs</div>
<div class="yl" style="left:598.9px;top:365.6px;width:60px;text-align:center;transform-origin:50% 0">218.4 µs</div>
<div class="yl" style="right:5.5px;top:365.6px;transform-origin:100% 0">245.4 µs</div>
<svg style="position:absolute;left:95.5px;top:363.5px" width="6" height="6"><path d="M2.5 0.3 L5 5.2 L0 5.2 Z" fill="#e4e400"/></svg>
<div style="left:1.6px;top:381px;width:431.5px;height:17.6px;border:1px solid #585858"></div>
<div style="left:1.6px;top:389.8px;width:431px;height:1px;background:#585858"></div>
<div style="left:24.0px;top:381.5px;width:1px;height:16.6px;background:#585858"></div>
<div style="left:61.7px;top:381.5px;width:1px;height:16.6px;background:#585858"></div>
<div style="left:104.8px;top:381.5px;width:1px;height:16.6px;background:#585858"></div>
<div style="left:148.9px;top:381.5px;width:1px;height:16.6px;background:#585858"></div>
<div style="left:164.3px;top:381.5px;width:1px;height:16.6px;background:#585858"></div>
<div style="left:188.3px;top:381.5px;width:1px;height:16.6px;background:#585858"></div>
<div style="left:398.3px;top:381.5px;width:1px;height:16.6px;background:#585858"></div>
<div style="left:1.8px;top:381.2px;width:22.2px;height:8.6px;background:#e8e800"></div>
<div class="tc" style="left:2.8px;top:381.8px;font-weight:bold;font-size:8.4px;transform:scaleX(0.8);color:#111">I2C</div>
<div class="tc" style="left:25.5px;top:381.8px;font-weight:bold;font-size:8.4px;transform:scaleX(0.8);">Time</div>
<div class="tc" style="left:63.0px;top:381.8px;font-weight:bold;font-size:8.4px;transform:scaleX(0.8);">Addr L...</div>
<div class="tc" style="left:106.9px;top:381.8px;font-weight:bold;font-size:8.4px;transform:scaleX(0.8);">Address</div>
<div class="tc" style="left:149.7px;top:381.8px;font-weight:bold;font-size:8.4px;transform:scaleX(0.8);">R/W</div>
<div class="tc" style="left:166.0px;top:381.8px;font-weight:bold;font-size:8.4px;transform:scaleX(0.8);">L...</div>
<div class="tc" style="left:190.5px;top:381.8px;font-weight:bold;font-size:8.4px;transform:scaleX(0.8);">Data</div>
<div class="tc" style="left:399.8px;top:381.8px;font-weight:bold;font-size:8.4px;transform:scaleX(0.8);">Status</div>
<svg style="position:absolute;left:98.5px;top:384px" width="5" height="5"><path d="M4.6 0.2 L4.6 4.6 L0.2 4.6 Z" fill="#e8e8e8"/></svg>
<svg style="position:absolute;left:182.0px;top:384px" width="5" height="5"><path d="M4.6 0.2 L4.6 4.6 L0.2 4.6 Z" fill="#e8e8e8"/></svg>
<svg style="position:absolute;left:54px;top:392.5px" width="5" height="5"><path d="M4.6 0.2 L4.6 4.6 L0.2 4.6 Z" fill="#e8e8e8"/></svg>
<div class="tc" style="left:2.8px;top:389.8px;font-size:8.4px;transform:scaleX(0.84)">1</div>
<div class="tc" style="left:25.4px;top:389.8px;font-size:8.4px;transform:scaleX(0.84)">-2.168...</div>
<div class="tc" style="left:82.3px;top:389.8px;font-size:8.4px;transform:scaleX(0.84)">7</div>
<div class="tc" style="left:106.9px;top:389.8px;font-size:8.4px;transform:scaleX(0.84)">0xd8</div>
<div class="tc" style="left:152.3px;top:389.8px;font-size:8.4px;transform:scaleX(0.84)">W</div>
<div class="tc" style="left:175.4px;top:389.8px;font-size:8.4px;transform:scaleX(0.84)">2</div>
<div class="tc" style="left:190.5px;top:389.8px;font-size:8.4px;transform:scaleX(0.84)">0x46 18</div>
<div style="left:2px;top:401px;width:54px;height:8.6px;background:#eeee00"></div>
<div class="tc" style="left:3.8px;top:400.6px;color:#111;font-size:8.4px">M1</div>
<div style="left:2px;top:409.5px;width:54px;height:18px;background:#2a5a84;border:1px solid #3a74a4;border-bottom:1.5px solid #36a09c"></div>
<div class="tc" style="right:645.5px;top:410px;text-align:right;font-size:8.2px;color:#e8eef4;transform-origin:100% 0">850 mV/div</div>
<div class="tc" style="right:645.5px;top:417.8px;text-align:right;font-size:8.2px;color:#e8eef4;transform-origin:100% 0">27.0 µs/div</div>
<svg style="position:absolute;left:56px;top:400px" width="55" height="29"><rect x="1.2" y="1.1" width="52.5" height="26.5" fill="none" stroke="#b0b0b0" stroke-width="1.1" stroke-dasharray="1.5 1.6"/></svg>
<div style="left:79px;top:413.3px;width:7.5px;height:1.2px;background:#eee"></div>
<div style="left:82.2px;top:410.1px;width:1.2px;height:7.5px;background:#eee"></div>
<div style="left:0;top:428px;width:700px;height:10px;background:#2a2a2a"></div>
<div style="left:3.8px;top:428.3px;font-size:9px;line-height:10px;color:#ececec;white-space:nowrap;transform:scaleX(0.72);transform-origin:0 0"><b>TELEDYNE</b> LECROY</div>
<div style="left:582px;top:401px;width:118px;height:8px;background:#f4f4f4"></div>
<div style="left:582px;top:409px;width:12px;height:19px;background:#464646"></div>
<div class="tc" style="left:582.5px;top:400px;color:#335;font-size:8px">Tin</div>
<div class="tc" style="left:583px;top:418px;color:#ccd;font-size:8px">5 k</div>
<div style="left:696px;top:401px;width:4px;height:27px;background:#000"></div>
<div style="left:622px;top:429.5px;font-size:8.5px;color:#9a9a9a;line-height:10px;white-space:nowrap">5/28/2020 10:41:57 PM</div>
<div style="left:592px;top:401px;width:104px;height:33.5px;background:#fff"></div>
<div style="left:644px;top:400px;width:3.7px;height:1.5px;background:#000"></div>
<div style="left:671.5px;top:401.5px;width:23.5px;height:2.2px;background:#1a1a1a"></div>
<svg style="position:absolute;left:593.5px;top:404.5px" width="21" height="23" viewBox="0 0 21 23"><path d="M0.3 0.3 C4.5 0.8 8.3 3 8.6 9 L8.4 18 L7.1 18 L7 10 C6.8 6.5 4.5 4.2 0.3 3.8 Z" fill="#111"/><path d="M20.2 0.3 C16 0.8 12.2 3 11.9 9 L12.1 18 L13.4 18 L13.5 10 C13.7 6.5 16 4.2 20.2 3.8 Z" fill="#111"/><path d="M7.6 0.3 L12.9 0.3 L12.9 1.4 C11.6 2 11.3 3.5 11.2 6 L11.1 18 L9.4 18 L9.3 6 C9.2 3.5 8.9 2 7.6 1.4 Z" fill="#111"/><rect x="9.6" y="3" width="1.3" height="14" fill="#555"/><rect x="7" y="18.5" width="6.5" height="3.5" fill="#ccc" opacity="0.5"/></svg>
<div style="left:615.5px;top:404.5px;font-size:4.8px;font-weight:bold;color:#222;line-height:5px;white-space:nowrap;transform:scaleX(0.93);transform-origin:0 0">ЦЕНТР ИЗМЕРИТЕЛЬНОЙ ТЕХНИКИ</div>
<div style="left:617.5px;top:406.5px;font-size:17.5px;font-weight:bold;line-height:19px;white-space:nowrap;letter-spacing:1.4px;color:#f4b400;background:linear-gradient(180deg,#f09a00 0%,#f5b000 40%,#ffd000 75%);-webkit-background-clip:text;background-clip:text;-webkit-text-fill-color:transparent;-webkit-text-stroke:0.5px #f4b000;transform:scaleX(0.92);transform-origin:0 0">ЭТАЛ<span style="display:inline-block;width:13.5px;height:13.5px;vertical-align:-1px;margin:0 1.5px"></span>Н</div>
<svg style="position:absolute;left:668px;top:409.8px" width="14" height="14" viewBox="0 0 14 14"><defs><linearGradient id="gg" x1="0" y1="0" x2="0" y2="1"><stop offset="0" stop-color="#f0a000"/><stop offset="1" stop-color="#ffd000"/></linearGradient></defs><circle cx="7" cy="7" r="6.6" fill="url(#gg)"/><path d="M7 0.4 Q3 7 7 13.6 M7 0.4 Q11 7 7 13.6 M0.6 4.5 L13.4 4.5 M0.6 9.5 L13.4 9.5" stroke="#fff" stroke-width="0.5" fill="none" opacity="0.8"/><rect x="0.5" y="5.6" width="13" height="2.8" fill="#3a3a30"/></svg>
<div style="left:618px;top:423.5px;width:77px;height:3px;background:linear-gradient(180deg,rgba(255,220,120,0.45),rgba(255,255,255,0))"></div>
<div style="left:595px;top:427.6px;font-size:8.6px;font-weight:bold;color:#303030;line-height:8px;white-space:nowrap;transform:scaleX(0.815);transform-origin:0 0;letter-spacing:0.3px">ТЕРРИТОРИЯ ИЗМЕРЕНИЙ</div>
</body></html>
